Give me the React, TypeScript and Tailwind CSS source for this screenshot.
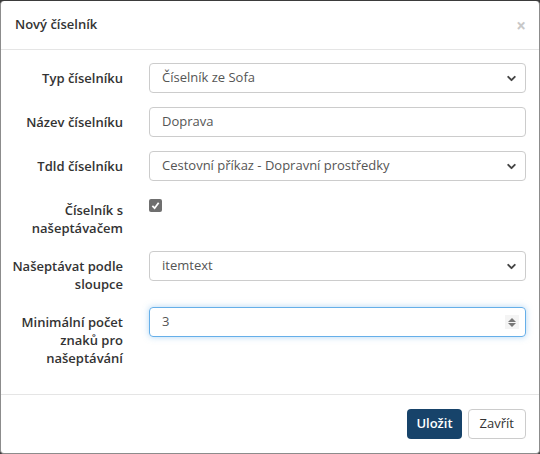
import { ChevronDown } from 'lucide-react';

const font = { fontFamily: '"Open Sans", "DejaVu Sans", sans-serif' };

function Label({ children }: { children: React.ReactNode }) {
    return (
        <div className="w-[148px] shrink-0 pr-[26px] pt-[6px] text-right font-semibold text-[13px] leading-[18px] text-[#333]">
            {children}
        </div>
    );
}

function Select({ value }: { value: string }) {
    return (
        <div className="flex-1 h-[30px] border border-[#ccc] rounded-[4px] flex items-center justify-between pl-[12px] pr-[7px] text-[13px] text-[#555] bg-white">
            <span>{value}</span>
            <ChevronDown size={13} strokeWidth={3.5} className="text-[#444]" />
        </div>
    );
}

export default function App() {
    return (
        <div className="w-[540px] h-[454px] bg-[#3b3b3b] pt-px" style={font}>
            <div className="h-[453px] bg-white rounded-[4px] border-x border-b border-[#8c8c8c] flex flex-col">
                {/* Header */}
                <div className="h-[49px] border-b border-[#e5e5e5] flex items-center justify-between pl-[14px] pr-[13px]">
                    <h4 className="font-semibold text-[13px] text-[#333]">Nový číselník</h4>
                    <span className="text-[#c8c8c8] text-[17px] leading-none font-bold">×</span>
                </div>

                {/* Body */}
                <div className="flex-1 pt-[13px] pr-[13px] flex flex-col gap-[14px]">
                    <div className="flex">
                        <Label>Typ číselníku</Label>
                        <Select value="Číselník ze Sofa" />
                    </div>
                    <div className="flex">
                        <Label>Název číselníku</Label>
                        <div className="flex-1 h-[30px] border border-[#ccc] rounded-[4px] flex items-center pl-[12px] text-[13px] text-[#555]">
                            Doprava
                        </div>
                    </div>
                    <div className="flex">
                        <Label>Tdld číselníku</Label>
                        <Select value="Cestovní příkaz - Dopravní prostředky" />
                    </div>
                    <div className="flex">
                        <Label>Číselník s<br />našeptávačem</Label>
                        <div className="pt-[4px]">
                            <span className="w-[13px] h-[13px] rounded-[2px] bg-[#6f6f6f] flex items-center justify-center">
                                <svg width="9" height="9" viewBox="0 0 10 10">
                                    <path d="M1.5 5.5 L4 8 L8.5 2" stroke="white" strokeWidth="2" fill="none" />
                                </svg>
                            </span>
                        </div>
                    </div>
                    <div className="flex">
                        <Label>Našeptávat podle<br />sloupce</Label>
                        <Select value="itemtext" />
                    </div>
                    <div className="flex">
                        <Label>Minimální počet<br />znaků pro<br />našeptávání</Label>
                        <div className="flex-1 h-[30px] border border-[#66afe9] rounded-[4px] flex items-center justify-between pl-[12px] pr-[6px] text-[13px] text-[#555] shadow-[0_0_6px_rgba(102,175,233,0.5)]">
                            <span>3</span>
                            <span className="w-[14px] h-[14px] bg-[#f4f4f4] flex flex-col items-center justify-center gap-[1px]">
                                <svg width="8" height="4" viewBox="0 0 8 4"><path d="M0 4 L4 0 L8 4 Z" fill="#777" /></svg>
                                <svg width="8" height="4" viewBox="0 0 8 4"><path d="M0 0 L4 4 L8 0 Z" fill="#777" /></svg>
                            </span>
                        </div>
                    </div>
                </div>

                {/* Footer */}
                <div className="border-t border-[#e5e5e5] h-[59px] flex items-start justify-end gap-[6px] pt-[14px] pr-[13px]">
                    <button className="h-[30px] px-[9px] rounded-[4px] bg-[#17436a] text-white font-semibold text-[13px]">
                        Uložit
                    </button>
                    <button className="h-[30px] px-[11px] rounded-[4px] border border-[#ccc] bg-white text-[#333] text-[13px]">
                        Zavřít
                    </button>
                </div>
            </div>
        </div>
    );
}
